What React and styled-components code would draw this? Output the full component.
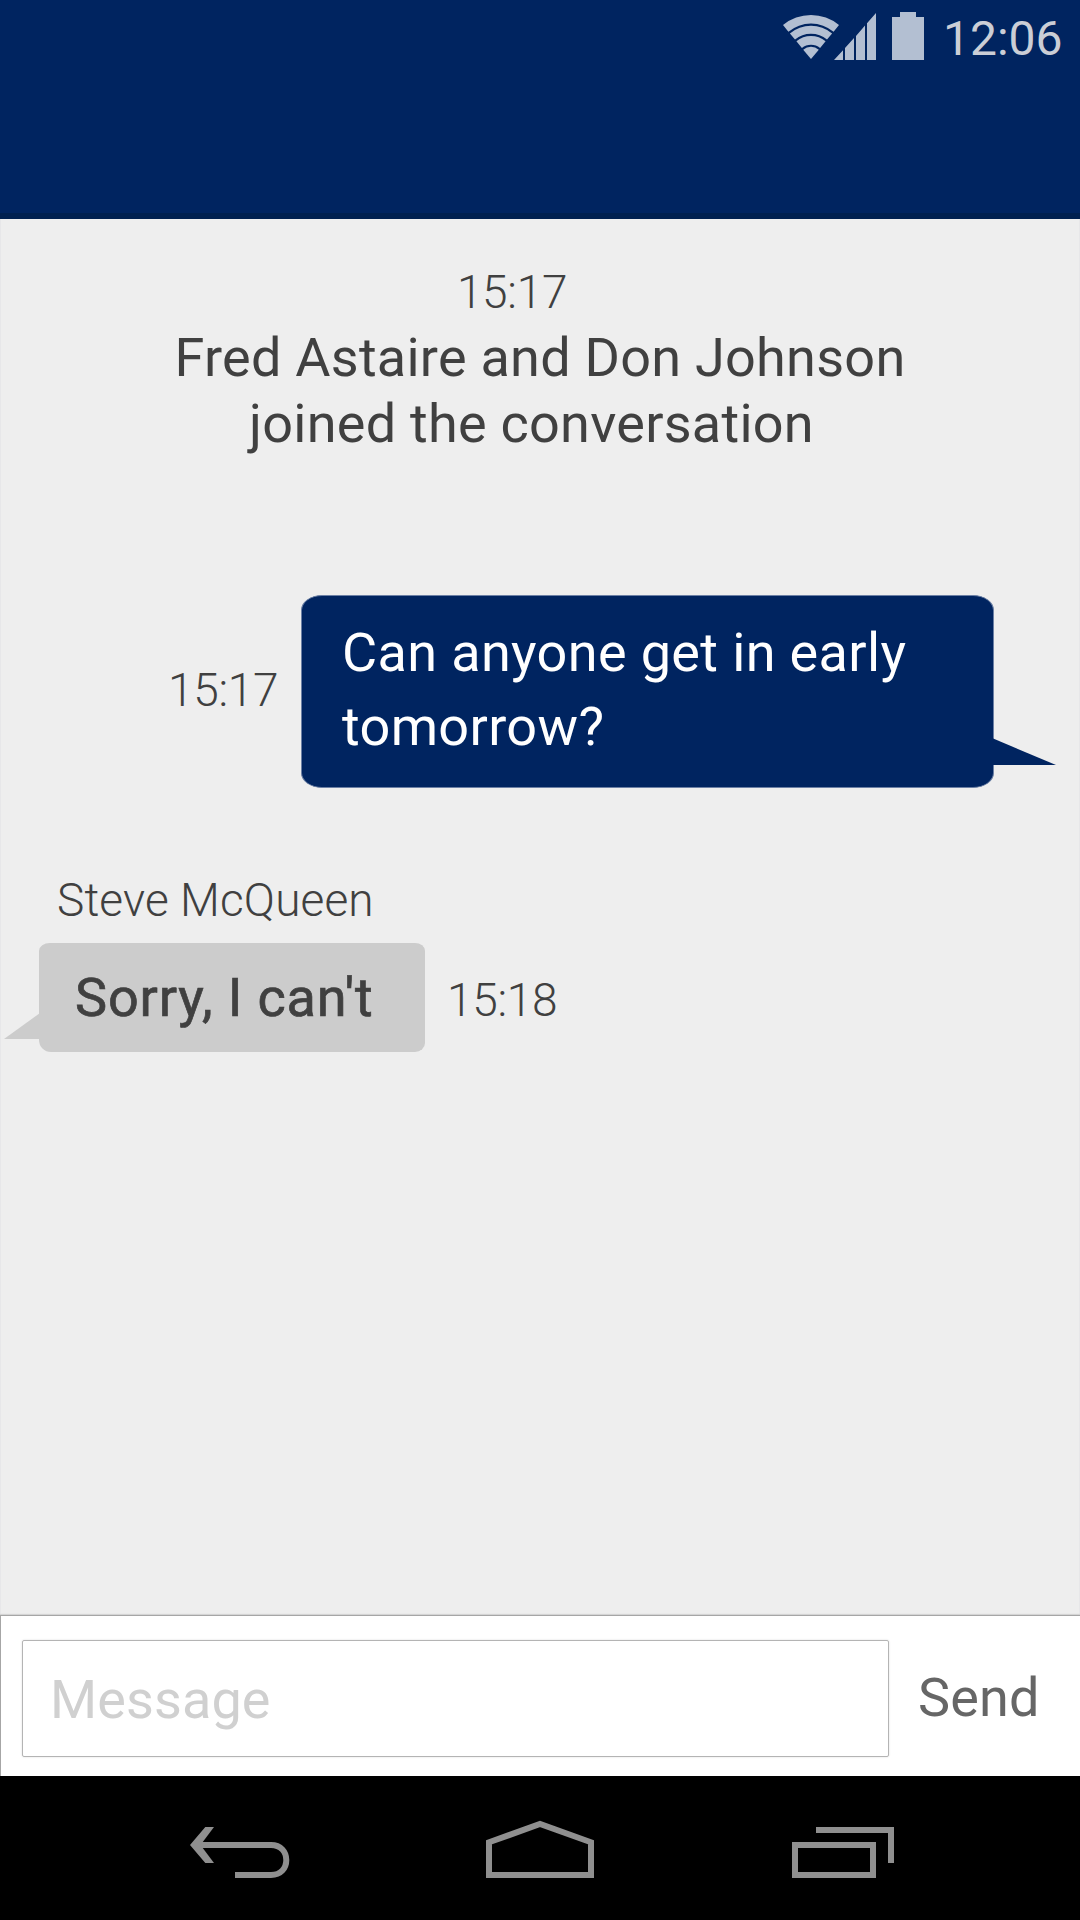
import React from "react";
import styled, { createGlobalStyle } from "styled-components";

const navy = "#002460";
const ink = "#404040";
const paper = "#eeeeee";

const GlobalStyle = createGlobalStyle`
  body {
    margin: 0;
    background: ${paper};
    font-family: Roboto, "Liberation Sans", sans-serif;
  }
  *, *::before, *::after { box-sizing: border-box; }
`;

const Screen = styled.div`
  width: 1080px;
  height: 1920px;
  display: flex;
  flex-direction: column;
  overflow: hidden;
  background: ${paper};
  color: ${ink};
`;

const Header = styled.header`
  flex: none;
  height: 219px;
  background: ${navy};
  border-bottom: 6px solid #00204f;
`;

const StatusBar = styled.div`
  display: flex;
  justify-content: flex-end;
  height: 78px;
  padding-right: 17px;
`;

const StatusIcons = styled.svg`
  flex: none;
  width: 144px;
  height: 76px;
  fill: #b3bfd2;
`;

const Clock = styled.span`
  width: 120px;
  margin-left: 16px;
  font-size: 48px;
  line-height: 78px;
  color: #cbced6;
`;

const Thread = styled.main`
  flex: 1;
  display: flex;
  flex-direction: column;
  border-left: 1px solid #e7e7e9;
  border-right: 1px solid #e7e7e9;
`;

const Notice = styled.section`
  display: flex;
  flex-direction: column;
  align-items: center;
  padding-top: 43px;
  text-align: center;
`;

const Time = styled.time`
  font-size: 46px;
  font-weight: 300;
  line-height: 60px;
  letter-spacing: -0.3px;
  margin-right: ${(p) => p.$right || 0}px;
  margin-left: ${(p) => p.$left || 0}px;
  margin-top: ${(p) => p.$top || 0}px;
`;

const NoticeLine = styled.p`
  margin: ${(p) => (p.$last ? "0 17px 0 0" : "2px 0 0 0")};
  font-size: 54px;
  line-height: ${(p) => (p.$last ? 66 : 67)}px;
  letter-spacing: 0.26px;
  white-space: nowrap;
`;

const OutgoingRow = styled.article`
  display: flex;
  align-items: flex-start;
  margin-top: 138px;
  padding-left: 167px;
`;

const Bubble = styled.div`
  position: relative;
  flex: none;
  width: ${(p) => p.$width}px;
  height: ${(p) => p.$height}px;
`;

const OutgoingBubble = styled(Bubble)`
  margin-left: auto;
  margin-right: 85px;
  padding: 20px 40px 0;
  border: 1px solid #6c80a5;
  border-radius: 21px / 15px;
  background: ${navy};
  color: #fff;

  &::after {
    content: "";
    position: absolute;
    left: 690px;
    top: 142px;
    width: 64px;
    height: 27px;
    background: ${navy};
    clip-path: polygon(0 0, 100% 100%, 0 100%);
  }
`;

const IncomingBubble = styled(Bubble)`
  padding: 22px 0 0 36px;
  border-radius: 11px 10px 10px 12px / 8px 8px 9px 12px;
  background: #cccccc;

  &::after {
    content: "";
    position: absolute;
    left: -35px;
    top: 70px;
    width: 36px;
    height: 26px;
    background: #cccccc;
    clip-path: polygon(0 100%, 100% 0, 100% 100%);
  }
`;

const MessageText = styled.p`
  margin: 0;
  font-size: 54px;
  line-height: ${(p) => p.$line}px;
  letter-spacing: ${(p) => p.$spacing};
  -webkit-text-stroke: ${(p) => (p.$heavy ? `0.7px ${ink}` : "0")};
  white-space: nowrap;
`;

const Incoming = styled.article`
  padding: 81px 0 0 38px;
`;

const Sender = styled.h2`
  margin: 0 0 12px 18px;
  font-size: 46px;
  font-weight: 300;
  line-height: 62px;
  letter-spacing: 0.12px;
`;

const IncomingRow = styled.div`
  display: flex;
`;

const Composer = styled.footer`
  position: relative;
  flex: none;
  display: flex;
  height: 161px;
  padding: 24px 0 0 21px;
  background: #fff;
  border-top: 1px solid #a6a6a6;
  border-left: 1px solid #a6a6a6;
  box-shadow: 0 -1px 1px #d4d4d4;
`;

const Field = styled.div`
  width: 867px;
  height: 117px;
  padding-left: 27px;
  border: 1px solid #b4b4b4;
  border-radius: 2px;
  box-shadow: 0 0 2px #d8d8d8;
  color: #d0d0d0;
  font-size: 54px;
  line-height: 118px;
  letter-spacing: 0.1px;
`;

const SendButton = styled.button`
  margin: 0 0 0 29px;
  padding: 0;
  height: 115px;
  border: 0;
  background: none;
  color: #666;
  font: 400 54px/115px Roboto, "Liberation Sans", sans-serif;
  letter-spacing: 0.2px;
`;

const NavBar = styled.nav`
  flex: none;
  display: grid;
  grid-template-columns: 1fr 1fr 1fr;
  height: 144px;
  padding: 0 170px;
  background: #000;
`;

const NavIcon = styled.svg`
  width: 140px;
  height: 100px;
  margin-top: 24px;
  justify-self: ${(p) => p.$align};
  fill: none;
  stroke: #8f8f8f;
  stroke-width: 6;
`;

export default function App() {
  return (
    <Screen>
      <GlobalStyle />
      <Header>
        <StatusBar>
          <StatusIcons viewBox="783 0 144 76">
            <path d="M783 25A44 44 0 0 1 839 25L833.6 31.7A35.3 35.3 0 0 0 788.4 31.7Z" />
            <path d="M789.9 33.5A33 33 0 0 1 832.1 33.5L827 39.6A25 25 0 0 0 795 39.6Z" />
            <path d="M796.4 41.3A22.8 22.8 0 0 1 825.6 41.3L820.1 48A14.2 14.2 0 0 0 801.9 48Z" />
            <path d="M803.2 49.7A12 12 0 0 1 818.8 49.7L811 59Z" />
            <path d="M834 60L843 50.3V60ZM845 48L854 38V60H845ZM856 36L865 25.5V60H856ZM867 23.2L876 13V60H867Z" />
            <path d="M892 17H900V12H916V17H924V60H892Z" />
          </StatusIcons>
          <Clock>12:06</Clock>
        </StatusBar>
      </Header>

      <Thread>
        <Notice>
          <Time $right={56}>15:17</Time>
          <NoticeLine>Fred Astaire and Don Johnson</NoticeLine>
          <NoticeLine $last>joined the conversation</NoticeLine>
        </Notice>

        <OutgoingRow>
          <Time $top={65}>15:17</Time>
          <OutgoingBubble $width={693} $height={193}>
            <MessageText $line={74} $spacing="0.36px">
              Can anyone get in early
              <br />
              tomorrow?
            </MessageText>
          </OutgoingBubble>
        </OutgoingRow>

        <Incoming>
          <Sender>Steve McQueen</Sender>
          <IncomingRow>
            <IncomingBubble $width={386} $height={109}>
              <MessageText $line={66} $heavy $spacing="0.85px">
                Sorry, I can't
              </MessageText>
            </IncomingBubble>
            <Time $left={22} $top={27}>15:18</Time>
          </IncomingRow>
        </Incoming>
      </Thread>

      <Composer>
        <Field>Message</Field>
        <SendButton>Send</SendButton>
      </Composer>

      <NavBar>
        <NavIcon $align="start" viewBox="170 1800 140 100">
          <path d="M195 1845H271C281 1845 286.300 1852 286.300 1860S281 1875 271 1875H235" />
          <path d="M205.300 1827H214L200.500 1845L214 1863H205.300L190 1845Z" fill="#8f8f8f" stroke="none" />
        </NavIcon>
        <NavIcon $align="center" viewBox="470 1800 140 100">
          <path d="M489 1875V1842.300L540 1824L591 1842.300V1875Z" />
        </NavIcon>
        <NavIcon $align="end" viewBox="770 1800 140 100">
          <path d="M795 1845H873V1875H795ZM816 1830H891V1863" />
        </NavIcon>
      </NavBar>
    </Screen>
  );
}
